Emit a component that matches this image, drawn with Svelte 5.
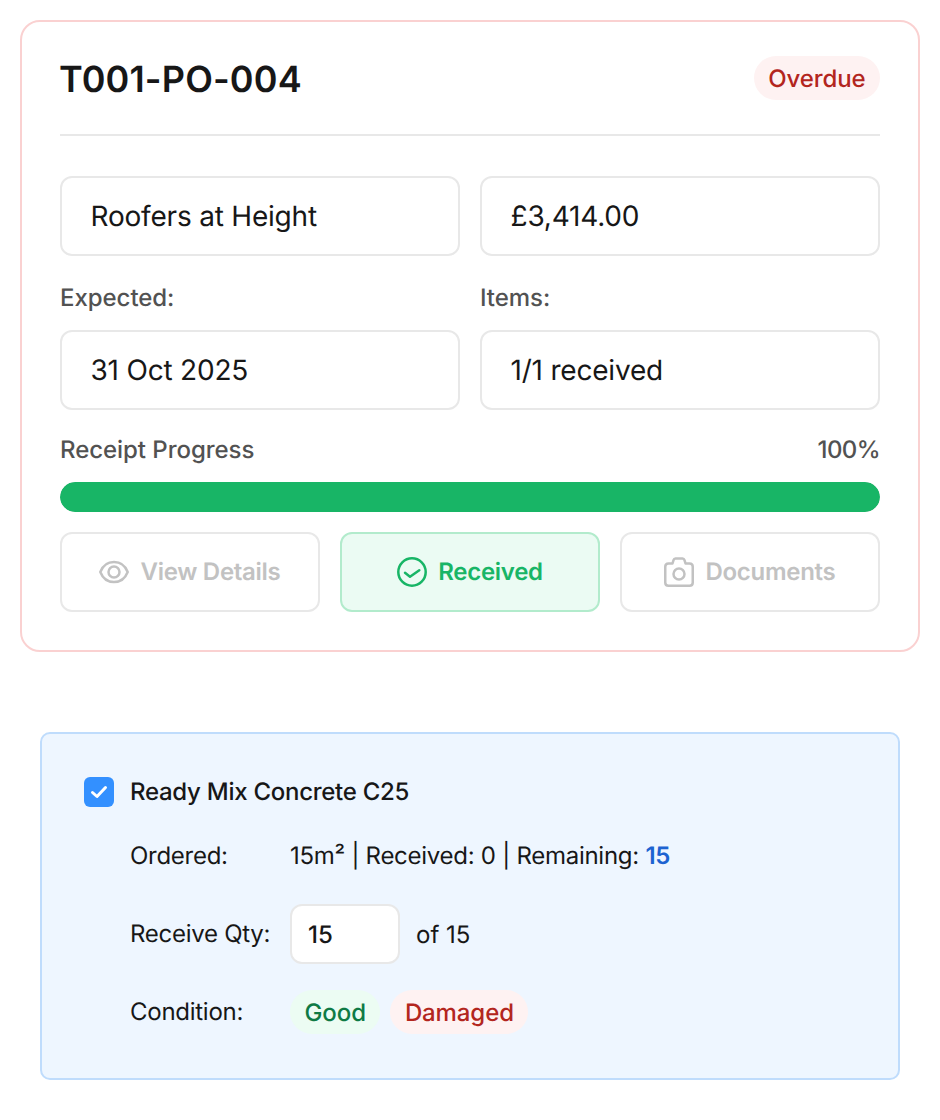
<script lang="ts">
  // purchase order summary card + one receive line below it
  const actions = [
    { id: 'view', label: 'View Details', state: 'off' },
    { id: 'received', label: 'Received', state: 'on' },
    { id: 'docs', label: 'Documents', state: 'off' }
  ];
</script>

<main class="page">
  <section class="po">
    <header class="po__head">
      <h1>T001-PO-004</h1>
      <span class="pill pill--red">Overdue</span>
    </header>

    <div class="po__grid">
      <div class="box">Roofers at Height</div>
      <div class="box">£3,414.00</div>
      <div class="field">
        <span class="field__label">Expected:</span>
        <div class="box">31 Oct 2025</div>
      </div>
      <div class="field">
        <span class="field__label">Items:</span>
        <div class="box">1/1 received</div>
      </div>
    </div>

    <div class="progress-label">
      <span>Receipt Progress</span>
      <span class="progress-label__pct">100%</span>
    </div>
    <div class="bar"><div class="bar__fill" style="width: 100%"></div></div>

    <div class="actions">
      {#each actions as a (a.id)}
        <button class="action" class:action--on={a.state === 'on'}>
          {#if a.id === 'view'}
            <svg viewBox="0 0 30 30" width="30" height="30" fill="none" stroke="currentColor" stroke-width="2.5" stroke-linecap="round" stroke-linejoin="round">
              <path d="M1.300 15C3.800 8.600 9 5 15 5s11.200 3.600 13.700 10C26.200 21.400 21 25 15 25S3.800 21.400 1.300 15z" />
              <circle cx="15" cy="15" r="5.500" />
            </svg>
          {:else if a.id === 'received'}
            <svg viewBox="0 0 30 30" width="30" height="30" fill="none" stroke="currentColor" stroke-width="2.5" stroke-linecap="round" stroke-linejoin="round">
              <circle cx="15" cy="15" r="13.700" />
              <path d="M8 15.700l5 4 9.300-6.400" />
            </svg>
          {:else}
            <svg viewBox="0 0 30 30" width="30" height="30" fill="none" stroke="currentColor" stroke-width="2.5" stroke-linecap="round" stroke-linejoin="round">
              <path d="M4.500 6.500H8.500L9.500 3.200Q10 1.500 11.500 1.500H18.500Q20 1.500 20.500 3.200L21.500 6.500H25.500Q28.750 6.500 28.750 9.750V25.500Q28.750 28.750 25.500 28.750H4.500Q1.250 28.750 1.250 25.500V9.750Q1.250 6.500 4.500 6.500Z" />
              <circle cx="15" cy="17" r="5.500" />
            </svg>
          {/if}
          <span class="action__label">{a.label}</span>
        </button>
      {/each}
    </div>
  </section>

  <section class="line">
    <div class="line__title">
      <span class="check">
        <svg viewBox="0 0 30 30" width="30" height="30" fill="none" stroke="#fff" stroke-width="3" stroke-linecap="round" stroke-linejoin="round">
          <path d="M8.500 15.500l4.500 4 8.500-9" />
        </svg>
      </span>
      <span>Ready Mix Concrete C25</span>
    </div>

    <div class="line__rows">
      <span class="line__key">Ordered:</span>
      <span class="line__val line__val--text">15m² | Received: 0 | Remaining: <b>15</b></span>

      <span class="line__key">Receive Qty:</span>
      <span class="line__val line__val--qty">
        <input class="qty" type="text" value="15" />
        <span>of 15</span>
      </span>

      <span class="line__key">Condition:</span>
      <span class="line__val line__val--pills">
        <span class="pill pill--green">Good</span>
        <span class="pill pill--red">Damaged</span>
      </span>
    </div>
  </section>
</main>

<style>
  :global(body) {
    margin: 0;
    background: #fff;
  }

  .page {
    box-sizing: border-box;
    width: 940px;
    height: 1120px;
    padding: 20px;
    font-family: Inter, "Liberation Sans", sans-serif;
    color: #171717;
    text-rendering: geometricPrecision;
  }

  .po {
    box-sizing: border-box;
    height: 632px;
    padding: 34px 38px 38px;
    border: 2px solid #fad1d1;
    border-radius: 20px;
    background: #fff;
  }

  .po__head {
    display: flex;
    align-items: flex-start;
    justify-content: space-between;
    height: 46px;
    padding-bottom: 32px;
    border-bottom: 2px solid #e8e8e8;
  }

  .po__head h1 {
    margin: 0 0 0 -1px;
    font-size: 36px;
    line-height: 46px;
    font-weight: 600;
    letter-spacing: 0.15px;
    color: #171717;
  }

  .pill {
    display: inline-flex;
    align-items: center;
    height: 44px;
    padding: 0 14.500px;
    border-radius: 22px;
    font-size: 24px;
    font-weight: 500;
    letter-spacing: -0.1px;
  }

  .pill--red {
    background: #fef2f2;
    color: #b3261e;
  }

  .pill--green {
    background: #ecfcf3;
    color: #0f7a45;
  }

  .po__grid {
    display: grid;
    grid-template-columns: 400px 400px;
    column-gap: 20px;
    row-gap: 20px;
    margin-top: 40px;
  }

  .box {
    box-sizing: border-box;
    height: 80px;
    display: flex;
    align-items: center;
    padding: 0 28.500px;
    border: 2px solid #e8e8e8;
    border-radius: 12px;
    font-size: 28px;
    letter-spacing: -0.2px;
    color: #171717;
  }

  .field__label {
    display: block;
    height: 34px;
    line-height: 44px;
    margin-bottom: 20px;
    font-size: 24px;
    font-weight: 500;
    color: #525252;
    letter-spacing: -0.05px;
  }

  .progress-label {
    display: flex;
    justify-content: space-between;
    margin-top: 25px;
    font-size: 24px;
    font-weight: 500;
    letter-spacing: -0.05px;
    line-height: 30px;
    color: #525252;
  }

  .progress-label__pct {
    letter-spacing: -0.6px;
  }

  .bar {
    height: 30px;
    margin-top: 17px;
    border-radius: 15px;
    background: #e8e8e8;
    overflow: hidden;
  }

  .bar__fill {
    height: 100%;
    border-radius: 15px;
    background: #18b566;
  }

  .actions {
    display: grid;
    grid-template-columns: repeat(3, 260px);
    column-gap: 20px;
    margin-top: 20px;
  }

  .action {
    box-sizing: border-box;
    height: 80px;
    display: flex;
    align-items: center;
    justify-content: center;
    gap: 11px;
    padding: 0;
    border: 2px solid #e8e8e8;
    border-radius: 12px;
    background: #fff;
    font-family: inherit;
    text-rendering: inherit;
    font-size: 24px;
    font-weight: 600;
    letter-spacing: -0.28px;
    color: #c2c2c2;
  }

  .action__label {
    padding-bottom: 2px;
  }

  .action--on {
    border-color: #b2ebcc;
    background: #ebfbf3;
    color: #18b566;
  }

  .line {
    box-sizing: border-box;
    height: 348px;
    margin: 80px 20px 0;
    padding: 43px 42px 0;
    border: 2px solid #bfdcfc;
    border-radius: 10px;
    background: #eef6ff;
    font-size: 24px;
  }

  .line__title {
    display: flex;
    align-items: center;
    gap: 16px;
    font-weight: 500;
    letter-spacing: -0.27px;
    line-height: 30px;
  }

  .check {
    width: 30px;
    height: 30px;
    border-radius: 6px;
    background: #3390ff;
    display: block;
  }

  .check svg {
    display: block;
  }

  .line__rows {
    display: grid;
    grid-template-columns: 160px 1fr;
    grid-template-rows: 60px 60px 60px;
    row-gap: 18px;
    align-items: center;
    margin: 19px 0 0 46px;
  }

  .line__key,
  .line__val--text {
    padding-bottom: 2px;
    letter-spacing: -0.27px;
  }

  .line__val b {
    font-weight: 600;
    color: #1d63d1;
  }

  .line__val--qty {
    display: flex;
    align-items: center;
    gap: 16px;
  }

  .qty {
    box-sizing: border-box;
    width: 110px;
    height: 60px;
    padding: 0 16px;
    border: 2px solid #e8e8e8;
    border-radius: 12px;
    background: #fff;
    font-family: inherit;
    text-rendering: inherit;
    font-size: 24px;
    font-weight: 500;
    color: #171717;
    outline: none;
  }

  .line__val--pills {
    display: flex;
    gap: 10px;
  }
</style>
